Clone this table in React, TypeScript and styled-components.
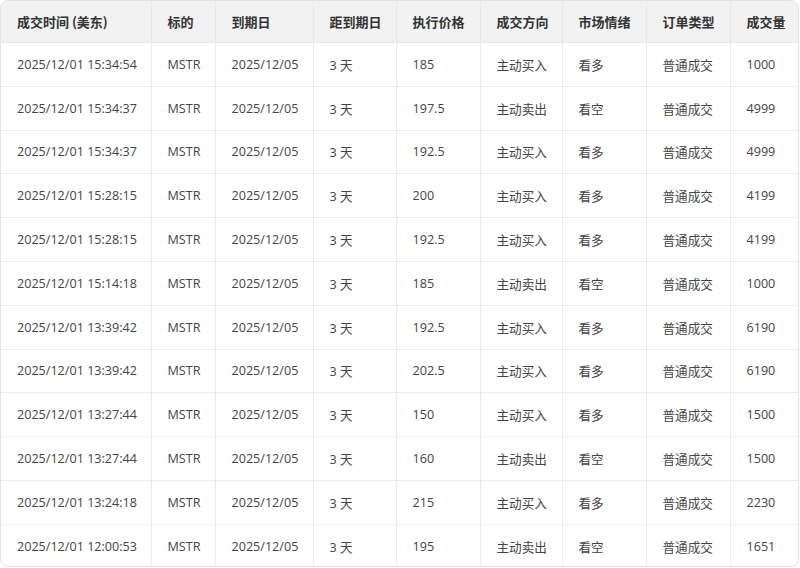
import React from "react";
import styled, { createGlobalStyle } from "styled-components";

const Global = createGlobalStyle`
  html, body { margin: 0; padding: 0; background: #fff; }
  body { font-family: "Open Sans", "Noto Sans CJK SC", sans-serif; }
`;

const Wrap = styled.div`
  width: 797px;
  height: 565px;
  border: 1px solid #e4e4e4;
  border-radius: 8px;
  overflow: hidden;
  background: #fff;
`;

const Table = styled.table`
  width: 100%;
  border-collapse: collapse;
  table-layout: fixed;
  font-size: 12.6px;
`;

const Th = styled.th`
  height: 41px;
  padding: 0 0 0 16px;
  text-align: left;
  font-weight: 700;
  font-size: 13px;
  color: #333;
  background: #f2f2f2;
  border-right: 1px solid #e8e8e8;
  border-bottom: 1px solid #e8e8e8;
  white-space: nowrap;
  font-family: "Noto Sans CJK SC", "Open Sans", sans-serif;
  &:last-child { border-right: none; }
`;

const Td = styled.td`
  height: 42.8px;
  padding: 0 0 0 16px;
  color: #444;
  border-right: 1px solid #ececec;
  border-bottom: 1px solid #ececec;
  white-space: nowrap;
  &:last-child { border-right: none; }
`;

const Row = styled.tr`
  &:last-child td { border-bottom: none; }
`;

const widths = [150, 64, 98, 83, 84, 82, 84, 84, 68];
const headers = ["成交时间 (美东)", "标的", "到期日", "距到期日", "执行价格", "成交方向", "市场情绪", "订单类型", "成交量"];

const rows: [string, string, string, string][] = [
  ["15:34:54", "185", "买", "1000"],
  ["15:34:37", "197.5", "卖", "4999"],
  ["15:34:37", "192.5", "买", "4999"],
  ["15:28:15", "200", "买", "4199"],
  ["15:28:15", "192.5", "买", "4199"],
  ["15:14:18", "185", "卖", "1000"],
  ["13:39:42", "192.5", "买", "6190"],
  ["13:39:42", "202.5", "买", "6190"],
  ["13:27:44", "150", "买", "1500"],
  ["13:27:44", "160", "卖", "1500"],
  ["13:24:18", "215", "买", "2230"],
  ["12:00:53", "195", "卖", "1651"],
];

export default function App() {
  return (
    <>
      <Global />
      <Wrap>
        <Table>
          <colgroup>
            {widths.map((w, i) => (
              <col key={i} style={{ width: w }} />
            ))}
          </colgroup>
          <thead>
            <tr>
              {headers.map((h) => (
                <Th key={h}>{h}</Th>
              ))}
            </tr>
          </thead>
          <tbody>
            {rows.map(([t, p, d, v], i) => (
              <Row key={i}>
                <Td>2025/12/01 {t}</Td>
                <Td>MSTR</Td>
                <Td>2025/12/05</Td>
                <Td>3 天</Td>
                <Td>{p}</Td>
                <Td>{d === "买" ? "主动买入" : "主动卖出"}</Td>
                <Td>{d === "买" ? "看多" : "看空"}</Td>
                <Td>普通成交</Td>
                <Td>{v}</Td>
              </Row>
            ))}
          </tbody>
        </Table>
      </Wrap>
    </>
  );
}
